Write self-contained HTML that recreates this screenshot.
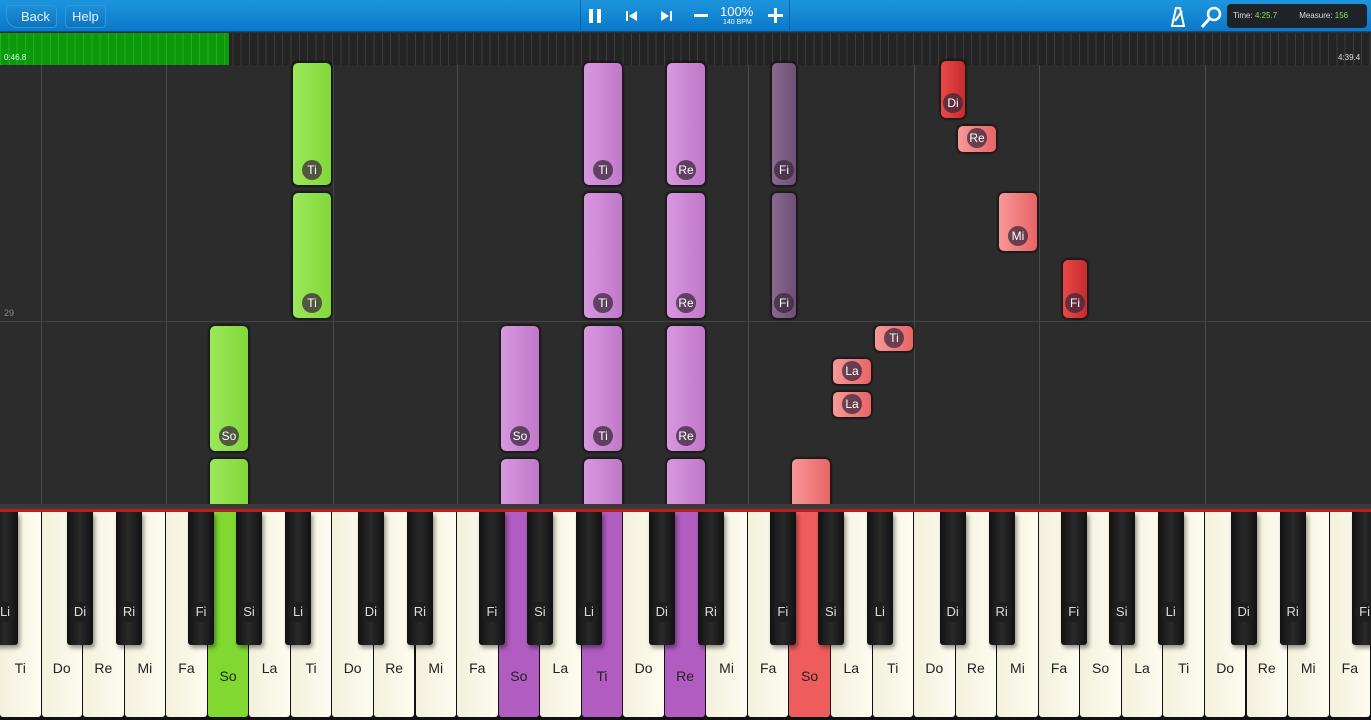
<!DOCTYPE html><html><head><meta charset="utf-8"><style>
*{margin:0;padding:0;box-sizing:border-box}
body{width:1371px;height:720px;overflow:hidden;background:#2c2c2c;font-family:"Liberation Sans",sans-serif;position:relative}
.a{position:absolute}
.top{left:0;top:0;width:1371px;height:32px;background:linear-gradient(#1d95de,#0b78c8);border-bottom:1px solid #0a4f85}
.btn{top:5px;height:23px;border-radius:4px;background:linear-gradient(#1f8fd6,#0d74c0);border:1px solid #2a9be0;color:#e8f4ff;font-size:13px;line-height:21px;padding:0 6px}
.prog{left:0;top:33px;width:1371px;height:32px;background:repeating-linear-gradient(90deg,#3c3c3c 0 1px,#242424 1px 8.3px),#2a2a2a}
.grn{left:0;top:33px;width:229px;height:32px;background:repeating-linear-gradient(90deg,#1fae1f 0 1px,#0c9a0c 1px 8.3px)}
.vl{top:65px;width:1px;height:445px;background:#4a4a4a}
.n{border-radius:6px;border:1px solid #1a1a1a;box-shadow:0 0 2px #000}
.g{background:linear-gradient(90deg,#9be85a,#82d83a)}
.p{background:linear-gradient(90deg,#d898e0,#c078c8)}
.dp{background:linear-gradient(90deg,#8a6a90,#6e5074)}
.r{background:linear-gradient(90deg,#e84848,#c82c2c)}
.lr{background:linear-gradient(90deg,#f89898,#e86464)}
.lb{position:absolute;left:50%;bottom:5px;transform:translateX(-50%);width:20px;height:20px;border-radius:50%;background:rgba(60,40,60,.75);color:#fff;font-size:12px;line-height:20px;text-align:center}
.wk{top:512px;height:205px;width:40.5px;background:linear-gradient(90deg,#f3f0dc,#fdfcf0);border-radius:0 0 3px 3px;font-size:14px;color:#222;text-align:center;padding-top:148px}
.bk{top:512px;height:133px;width:26px;background:linear-gradient(90deg,#111,#2a2a2a,#111);border-radius:0 0 3px 3px;color:#ddd;font-size:13px;text-align:center;padding-top:90px;box-shadow:2px 3px 4px rgba(0,0,0,.4)}
.bk span{display:inline-block;width:20px;height:20px;line-height:20px;border-radius:50%;background:#1e1e1e}
</style></head><body>
<div class="a top"></div>
<div class="a btn" style="left:6px;border-radius:4px 4px 4px 12px;padding-left:14px">Back</div>
<div class="a btn" style="left:65px">Help</div>
<div class="a" style="left:580px;top:0;width:210px;height:32px;border-left:1px solid #0a62a8;border-right:1px solid #0a62a8"></div>
<div class="a" style="left:589px;top:9px;width:4px;height:14px;background:#fff"></div><div class="a" style="left:597px;top:9px;width:4px;height:14px;background:#fff"></div>
<svg class="a" style="left:624px;top:9px" width="60" height="14"><rect x="2" y="2" width="2" height="10" fill="#fff"/><path d="M13 2 L5 7 L13 12Z" fill="#fff"/><path d="M37 2 L45 7 L37 12Z" fill="#fff"/><rect x="46" y="2" width="2" height="10" fill="#fff"/></svg>
<div class="a" style="left:694px;top:14px;width:14px;height:3px;background:#fff"></div>
<div class="a" style="left:720px;top:4px;color:#fff;font-size:13px">100%</div>
<div class="a" style="left:723px;top:19px;color:#fff;font-size:7px">140 BPM</div>
<div class="a" style="left:768px;top:14px;width:15px;height:3px;background:#fff"></div><div class="a" style="left:774px;top:8px;width:3px;height:15px;background:#fff"></div>
<svg class="a" style="left:1168px;top:5px" width="60" height="24"><path d="M4 21 L8 3 L12 3 L16 21Z" fill="none" stroke="#fff" stroke-width="2"/><path d="M7 16 L14 6" stroke="#fff" stroke-width="2"/><circle cx="46" cy="9" r="6" fill="none" stroke="#fff" stroke-width="2.5"/><path d="M42 13 L34 22" stroke="#fff" stroke-width="3"/></svg>
<div class="a" style="left:1227px;top:4px;width:140px;height:24px;background:#1d2328;border-radius:4px;font-size:8px;color:#ddd;line-height:24px;padding-left:6px">Time: <span style="color:#8ce050">4:25.7</span><span style="margin-left:22px">Measure: <span style="color:#8ce050">156</span></span></div>
<div class="a prog"></div><div class="a grn"></div>
<div class="a" style="left:4px;top:53px;font-size:8px;color:#cfe">0:46.8</div>
<div class="a" style="left:1338px;top:53px;font-size:8px;color:#ddd">4:39.4</div>
<div class="a" style="left:0;top:65px;width:1371px;height:445px;background:#2c2c2c"></div>
<div class="a vl" style="left:41px"></div><div class="a vl" style="left:166px"></div><div class="a vl" style="left:333px"></div><div class="a vl" style="left:457px"></div><div class="a vl" style="left:748px"></div><div class="a vl" style="left:914px"></div><div class="a vl" style="left:1039px"></div><div class="a vl" style="left:1205px"></div>
<div class="a" style="left:0;top:321px;width:1371px;height:1px;background:#444"></div>
<div class="a" style="left:4px;top:308px;font-size:9px;color:#888">29</div>
<div class="a n g" style="left:292px;top:62px;width:40px;height:124px"><span class="lb">Ti</span></div>
<div class="a n g" style="left:292px;top:192px;width:40px;height:127px"><span class="lb">Ti</span></div>
<div class="a n g" style="left:209px;top:325px;width:40px;height:127px"><span class="lb">So</span></div>
<div class="a n g" style="left:209px;top:458px;width:40px;height:60px"></div>
<div class="a n p" style="left:583px;top:62px;width:40px;height:124px"><span class="lb">Ti</span></div>
<div class="a n p" style="left:583px;top:192px;width:40px;height:127px"><span class="lb">Ti</span></div>
<div class="a n p" style="left:583px;top:325px;width:40px;height:127px"><span class="lb">Ti</span></div>
<div class="a n p" style="left:583px;top:458px;width:40px;height:60px"></div>
<div class="a n p" style="left:666px;top:62px;width:40px;height:124px"><span class="lb">Re</span></div>
<div class="a n p" style="left:666px;top:192px;width:40px;height:127px"><span class="lb">Re</span></div>
<div class="a n p" style="left:666px;top:325px;width:40px;height:127px"><span class="lb">Re</span></div>
<div class="a n p" style="left:666px;top:458px;width:40px;height:60px"></div>
<div class="a n p" style="left:500px;top:325px;width:40px;height:127px"><span class="lb">So</span></div>
<div class="a n p" style="left:500px;top:458px;width:40px;height:60px"></div>
<div class="a n dp" style="left:771px;top:62px;width:26px;height:124px"><span class="lb">Fi</span></div>
<div class="a n dp" style="left:771px;top:192px;width:26px;height:127px"><span class="lb">Fi</span></div>
<div class="a n r" style="left:940px;top:60px;width:26px;height:59px"><span class="lb">Di</span></div>
<div class="a n lr" style="left:957px;top:125px;width:40px;height:28px"><span class="lb" style="bottom:4px">Re</span></div>
<div class="a n lr" style="left:998px;top:192px;width:40px;height:60px"><span class="lb">Mi</span></div>
<div class="a n r" style="left:1062px;top:259px;width:26px;height:60px"><span class="lb">Fi</span></div>
<div class="a n lr" style="left:874px;top:325px;width:40px;height:27px"><span class="lb" style="bottom:3px">Ti</span></div>
<div class="a n lr" style="left:832px;top:358px;width:40px;height:27px"><span class="lb" style="bottom:3px">La</span></div>
<div class="a n lr" style="left:832px;top:391px;width:40px;height:27px"><span class="lb" style="bottom:3px">La</span></div>
<div class="a n lr" style="left:791px;top:458px;width:40px;height:60px"></div>
<div class="a" style="left:0;top:504px;width:1371px;height:216px;background:#111"></div>
<div class="a" style="left:0;top:504px;width:1371px;height:5px;background:#3a3a3a"></div>
<div class="a" style="left:0;top:509px;width:1371px;height:3px;background:#b82020"></div>
<div id="kb"></div>
<script>
var w=["Ti","Do","Re","Mi","Fa","So","La"],h="",k=41.55;
var hi={5:"#80d830",12:"#b05cc0",14:"#b05cc0",16:"#b05cc0",19:"#ee5c5c"};
for(var i=0;i<33;i++){var l=w[i%7];var st="left:"+(i*k).toFixed(1)+"px;";if(hi[i])st+="background:"+hi[i]+";padding-top:156px;";h+='<div class="a wk" style="'+st+'">'+l+'</div>';}
var b=[["Li",5],["Di",80],["Ri",129],["Fi",201],["Si",249],["Li",298]];
for(var o=0;o<5;o++)for(var j=0;j<6;j++){var x=b[j][1]+o*290.9;if(o>0&&j==0)continue;if(x>1380)continue;h+='<div class="a bk" style="left:'+(x-13).toFixed(1)+'px"><span>'+b[j][0]+'</span></div>';}
document.getElementById("kb").innerHTML=h;
</script>
</body></html>
